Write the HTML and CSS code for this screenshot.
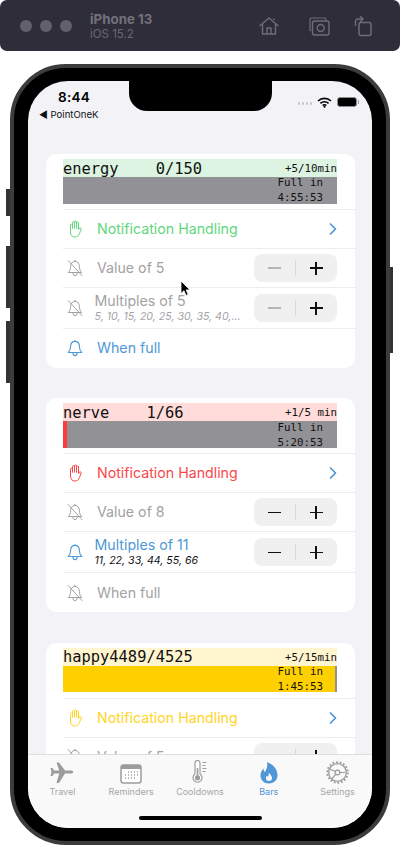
FILE: index.html
```html
<!DOCTYPE html>
<html lang="en">
<head>
    <meta charset="UTF-8">
    <meta name="viewport" content="width=device-width, initial-scale=1.0">
    <title>PointOneK bars</title>
    <link rel="stylesheet" href="styles.css">
</head>
<body>
    <svg class="defs" width="0" height="0">
        <symbol id="hand" viewBox="0 0 14 18">
            <path d="M2.5 11V5.2a1 1 0 0 1 2 0V8M4.5 8V2.6a1 1 0 0 1 2 0V8M6.5 8V2a1 1 0 0 1 2 0v6M8.5 8V3a1 1 0 0 1 2 0v6.6l.9-1.5a1 1 0 0 1 1.7 1l-1.6 4.4C10.6 16 9.2 17 7 17c-3 0-4.5-2-4.5-5V10" fill="none" stroke="currentColor" stroke-width="1" stroke-linecap="round" stroke-linejoin="round"/>
        </symbol>
        <symbol id="bell" viewBox="0 0 16 18">
            <path d="M8 2.4C5 2.4 3.6 4.8 3.6 7.5c0 3-1 4.6-2.4 6h13.6c-1.4-1.4-2.4-3-2.4-6C12.4 4.8 11 2.4 8 2.4zM8 2.4V1.2M6 13.8v.8a2 2 0 0 0 4 0v-.8" fill="none" stroke="currentColor" stroke-width="1.1" stroke-linecap="round" stroke-linejoin="round"/>
        </symbol>
        <symbol id="bell-off" viewBox="0 0 16 18">
            <path d="M8 2.4C5 2.4 3.6 4.8 3.6 7.5c0 3-1 4.6-2.4 6h13.6c-1.4-1.4-2.4-3-2.4-6C12.4 4.8 11 2.4 8 2.4zM8 2.4V1.2M6 13.8v.8a2 2 0 0 0 4 0v-.8M1.2 1.6l13.8 15" fill="none" stroke="currentColor" stroke-width="1" stroke-linecap="round" stroke-linejoin="round"/>
        </symbol>
        <symbol id="chevron" viewBox="0 0 8 12">
            <path d="M1.5 1l5 5-5 5" fill="none" stroke="currentColor" stroke-width="1.7" stroke-linecap="round" stroke-linejoin="round"/>
        </symbol>
    </svg>

    <header class="toolbar">
        <div class="lights"><span></span><span></span><span></span></div>
        <div class="device">
            <div class="device-name">iPhone 13</div>
            <div class="device-os">iOS 15.2</div>
        </div>
        <div class="tools">
            <svg class="tool-home" width="22" height="20" viewBox="0 0 22 20"><path d="M1.5 10L11 2l9.5 8M4.5 8v10h13V8M9 18v-6h4v6M16 4V2.5" fill="none" stroke="currentColor" stroke-width="1.4" stroke-linejoin="round"/></svg>
            <svg width="22" height="20" viewBox="0 0 22 20"><path d="M3 14.5H2V3.5A1.5 1.5 0 0 1 3.5 2h13A1.5 1.5 0 0 1 18 3.5V4" fill="none" stroke="currentColor" stroke-width="1.2"/><rect x="4.5" y="5" width="16.5" height="14" rx="2" fill="none" stroke="currentColor" stroke-width="1.4"/><circle cx="12.7" cy="12" r="3.5" fill="none" stroke="currentColor" stroke-width="1.4"/></svg>
            <svg width="18" height="22" viewBox="0 0 18 22"><rect x="5" y="7.5" width="12" height="13" rx="2" fill="none" stroke="currentColor" stroke-width="1.5"/><path d="M1.5 11V6.500A2.500 2.500 0 0 1 4 4h4M6 1l3 3-3 3" fill="none" stroke="currentColor" stroke-width="1.4"/></svg>
        </div>
    </header>

    <div class="phone">
        <span class="side side-mute"></span>
        <span class="side side-up"></span>
        <span class="side side-down"></span>
        <span class="side side-power"></span>

        <div class="screen">
            <div class="notch"></div>
            <div class="status">
                <div>
                    <div class="time">8:44</div>
                    <div class="back">&#9664; PointOneK</div>
                </div>
                <div class="status-icons">
                    <span class="signal"><i></i><i></i><i></i><i></i></span>
                    <svg width="15" height="11" viewBox="0 0 14 10"><path d="M1 3.6a8.500 8.500 0 0 1 12 0M3.200 5.800a5.400 5.400 0 0 1 7.600 0M5.300 7.800a2.400 2.400 0 0 1 3.400 0" fill="none" stroke="#000" stroke-width="1.5"/><circle cx="7" cy="9" r="1" fill="#000"/></svg>
                    <span class="battery"></span>
                </div>
            </div>

            <main class="list">
                <section class="card">
                    <div class="bar-head bar-head-green">
                        <span class="bar-title">energy    0/150</span>
                        <span class="bar-rate">+5/10min</span>
                    </div>
                    <div class="bar">
                        <div class="bar-fill fill-green" style="width: 0%"></div>
                        <div class="bar-time">Full in<br>4:55:53</div>
                    </div>
                    <div class="row row-first text-green">
                        <svg class="row-icon hand"><use href="#hand"/></svg>
                        <span class="row-label">Notification Handling</span>
                        <svg class="chevron"><use href="#chevron"/></svg>
                    </div>
                    <div class="row row-value text-off">
                        <svg class="row-icon"><use href="#bell-off"/></svg>
                        <span class="row-label">Value of 5</span>
                        <div class="stepper"><span class="minus off"></span><span class="plus"></span></div>
                    </div>
                    <div class="row row-multi text-off">
                        <svg class="row-icon"><use href="#bell-off"/></svg>
                        <div class="row-stack">
                            <span class="row-label">Multiples of 5</span>
                            <span class="row-sub">5, 10, 15, 20, 25, 30, 35, 40,...</span>
                        </div>
                        <div class="stepper"><span class="minus off"></span><span class="plus"></span></div>
                    </div>
                    <div class="row row-last text-blue">
                        <svg class="row-icon"><use href="#bell"/></svg>
                        <span class="row-label">When full</span>
                    </div>
                </section>

                <section class="card">
                    <div class="bar-head bar-head-red">
                        <span class="bar-title">nerve    1/66</span>
                        <span class="bar-rate">+1/5 min</span>
                    </div>
                    <div class="bar">
                        <div class="bar-fill fill-red" style="width: 1.5%"></div>
                        <div class="bar-time">Full in<br>5:20:53</div>
                    </div>
                    <div class="row row-first text-red">
                        <svg class="row-icon hand"><use href="#hand"/></svg>
                        <span class="row-label">Notification Handling</span>
                        <svg class="chevron"><use href="#chevron"/></svg>
                    </div>
                    <div class="row row-value text-off">
                        <svg class="row-icon"><use href="#bell-off"/></svg>
                        <span class="row-label">Value of 8</span>
                        <div class="stepper"><span class="minus"></span><span class="plus"></span></div>
                    </div>
                    <div class="row row-multi text-blue">
                        <svg class="row-icon"><use href="#bell"/></svg>
                        <div class="row-stack">
                            <span class="row-label">Multiples of 11</span>
                            <span class="row-sub row-sub-on">11, 22, 33, 44, 55, 66</span>
                        </div>
                        <div class="stepper"><span class="minus"></span><span class="plus"></span></div>
                    </div>
                    <div class="row row-last text-off">
                        <svg class="row-icon"><use href="#bell-off"/></svg>
                        <span class="row-label">When full</span>
                    </div>
                </section>

                <section class="card">
                    <div class="bar-head bar-head-yellow">
                        <span class="bar-title">happy4489/4525</span>
                        <span class="bar-rate">+5/15min</span>
                    </div>
                    <div class="bar">
                        <div class="bar-fill fill-yellow" style="width: 99.2%"></div>
                        <div class="bar-time">Full in<br>1:45:53</div>
                    </div>
                    <div class="row row-first text-yellow">
                        <svg class="row-icon hand"><use href="#hand"/></svg>
                        <span class="row-label">Notification Handling</span>
                        <svg class="chevron"><use href="#chevron"/></svg>
                    </div>
                    <div class="row row-value text-off">
                        <svg class="row-icon"><use href="#bell-off"/></svg>
                        <span class="row-label">Value of 5</span>
                        <div class="stepper"><span class="minus"></span><span class="plus"></span></div>
                    </div>
                </section>
            </main>

            <nav class="tabs">
                <div class="tab">
                    <svg width="24" height="22" viewBox="0 0 24 22"><path d="M6.5.5H9l6 8h6c3 0 3 3 0 3h-6l-6 9.500H6.5l2.700-9.500H4l-1.500 2.500h-2l1-4-1-4h2L4 8.500h5.200z" fill="currentColor"/></svg>
                    <span>Travel</span>
                </div>
                <div class="tab">
                    <svg width="22" height="20" viewBox="0 0 22 20"><rect x="1" y="1" width="20" height="18" rx="2.5" fill="#fff" stroke="currentColor" stroke-width="1.5"/><path d="M1 2.500A1.500 1.500 0 0 1 2.500 1h17A1.500 1.500 0 0 1 21 2.500V5H1z" fill="currentColor"/><path d="M8 8h1M11 8h1M14 8h1M17 8h1M5 11h1M8 11h1M11 11h1M14 11h1M17 11h1M5 14h1M8 14h1M11 14h1M14 14h1" stroke="currentColor" stroke-width="1.3"/></svg>
                    <span>Reminders</span>
                </div>
                <div class="tab">
                    <svg width="16" height="24" viewBox="0 0 16 24"><path d="M3 14V3a2.500 2.500 0 0 1 5 0v11a4.500 4.500 0 1 1-5 0z" fill="#fff" stroke="currentColor" stroke-width="1.2"/><circle cx="5.5" cy="17.800" r="2.600" fill="currentColor"/><path d="M5.500 17V8" stroke="currentColor" stroke-width="1.6"/><path d="M10.500 2.500h4M10.500 5.500h3M10.500 8.500h4M10.500 11.500h3" stroke="currentColor"/></svg>
                    <span>Cooldowns</span>
                </div>
                <div class="tab tab-active">
                    <svg width="18" height="22" viewBox="0 0 18 22"><path fill-rule="evenodd" d="M7 0c5 2 10 6 10.500 12.500C17.800 18 14 21.500 9 21.500S.5 18 .5 13.500C.5 10.500 2 8 3.500 6.500c0 2 .5 3 1.500 3.500C6.500 7.500 8 4 7 0zM9 10.500c.5 2 3 3 3 5.500a3 3 0 0 1-6 0c0-1 .5-2 1.200-2.500 0 .8.300 1.200.800 1.300.5-1 .800-2.500 1-4.300z" fill="currentColor"/></svg>
                    <span>Bars</span>
                </div>
                <div class="tab">
                    <svg width="23" height="23" viewBox="0 0 23 23"><circle cx="11.5" cy="11.5" r="8.800" fill="none" stroke="currentColor" stroke-width="1.3"/><circle cx="11.5" cy="11.5" r="10.300" fill="none" stroke="currentColor" stroke-width="1.8" stroke-dasharray="1.8 1.8"/><circle cx="11.5" cy="11.5" r="2.400" fill="none" stroke="currentColor" stroke-width="1.2"/><path d="M3.500 8l5.800 2.500M9.800 13.400L5.500 18M13.900 11.500h5" fill="none" stroke="currentColor" stroke-width="1.2"/></svg>
                    <span>Settings</span>
                </div>
                <div class="home-bar"></div>
            </nav>
        </div>
    </div>

    <svg class="cursor" width="12" height="17" viewBox="0 0 12 17"><path d="M1 1v12.500l3-2.800 2 4.800 2.200-1-2-4.600H10z" fill="#000" stroke="#fff" stroke-width=".8"/></svg>
</body>
</html>
```

FILE: styles.css
```css
* {
    box-sizing: border-box;
}
body {
    margin: 0;
    width: 400px;
    height: 848px;
    overflow: hidden;
    position: relative;
    background: #fff;
    font-family: 'Inter', 'Noto Sans', sans-serif;
}
.defs {
    position: absolute;
}

/* simulator toolbar */
.toolbar {
    height: 51px;
    background: #2f2d3a;
    border-radius: 7px;
    display: flex;
    align-items: center;
    padding: 0 28px 0 20px;
}
.lights {
    display: flex;
    gap: 8px;
    width: 70px;
}
.lights span {
    width: 12px;
    height: 12px;
    border-radius: 50%;
    background: #62616b;
}
.device {
    padding-top: 2px;
}
.device-name {
    color: #72717b;
    font-size: 13.3px;
    font-weight: 700;
    line-height: 15px;
}
.device-os {
    color: #696872;
    font-size: 11.5px;
    line-height: 14px;
}
.tools {
    margin-left: auto;
    display: flex;
    align-items: center;
    gap: 24px;
    color: #6e6d77;
}
.tool-home {
    margin-right: 4px;
}

/* phone frame */
.phone {
    position: relative;
    width: 380px;
    height: 781px;
    margin: 13px 0 0 10px;
    padding: 13px 14px;
    background: #000;
    border: 4px solid #3c3c3e;
    border-radius: 56px;
}
.side {
    position: absolute;
    background: #333336;
}
.side-mute {
    left: -8px;
    top: 121px;
    width: 4px;
    height: 27px;
}
.side-up {
    left: -8px;
    top: 178px;
    width: 4px;
    height: 62px;
}
.side-down {
    left: -8px;
    top: 253px;
    width: 4px;
    height: 62px;
}
.side-power {
    right: -7px;
    top: 199px;
    width: 3px;
    height: 86px;
}
.screen {
    position: relative;
    height: 100%;
    background: #f2f2f7;
    border-radius: 40px;
    overflow: hidden;
    display: flex;
    flex-direction: column;
}
.notch {
    position: absolute;
    left: 101px;
    top: 0;
    width: 143px;
    height: 30px;
    background: #000;
    border-radius: 0 0 18px 18px;
}

/* status bar */
.status {
    height: 73px;
    flex: none;
    display: flex;
    justify-content: space-between;
    padding: 8px 15px 0 11px;
}
.time {
    margin-left: 19px;
    font-size: 13.5px;
    font-weight: 600;
    line-height: 17px;
    letter-spacing: .3px;
    color: #000;
}
.back {
    font-size: 9.6px;
    line-height: 14px;
    margin-top: 2px;
    color: #111;
}
.status-icons {
    display: flex;
    align-items: center;
    gap: 5px;
    height: 22px;
    margin-top: 2px;
}
.signal {
    display: flex;
    gap: 1.5px;
    margin-top: 3px;
}
.signal i {
    width: 2.5px;
    height: 2.5px;
    background: #c9c9cc;
    border-radius: 1px;
}
.battery {
    position: relative;
    width: 20px;
    height: 10px;
    background: #000;
    border: 1px solid #8d8d90;
    border-radius: 3px;
}
.battery::after {
    content: "";
    position: absolute;
    right: -3px;
    top: 2px;
    width: 1.5px;
    height: 4px;
    background: #9a9a9d;
}

/* list of bars */
.list {
    flex: 1;
    min-height: 0;
    overflow: hidden;
    padding: 0 17px 0 18px;
}
.card {
    background: #fff;
    border-radius: 10px;
    padding: 5px 0 0 17px;
    margin-bottom: 30.8px;
}
.bar-head {
    height: 18px;
    margin-right: 18px;
    display: flex;
    justify-content: space-between;
    align-items: center;
    padding-top: 1px;
    font-family: 'DejaVu Sans Mono', 'Liberation Mono', monospace;
    color: #111;
}
.bar-head-green {
    background: #dcf4e1;
}
.bar-head-red {
    background: #ffdcd9;
}
.bar-head-yellow {
    background: #fff5cf;
}
.bar-title {
    font-size: 15.4px;
    white-space: pre;
}
.bar-rate {
    font-size: 10.8px;
}
.bar {
    position: relative;
    height: 26.5px;
    margin-right: 18px;
    background: #929296;
    display: flex;
    align-items: center;
    justify-content: flex-end;
}
.bar-fill {
    position: absolute;
    left: 0;
    top: 0;
    bottom: 0;
}
.fill-green {
    background: #5fd67e;
}
.fill-red {
    background: #ff3b3b;
}
.fill-yellow {
    background: #ffd000;
}
.bar-time {
    position: relative;
    margin-right: 14px;
    font-family: 'DejaVu Sans Mono', 'Liberation Mono', monospace;
    font-size: 10.8px;
    line-height: 15px;
    color: #111;
}

/* rows */
.row {
    display: flex;
    align-items: center;
    padding-right: 18px;
    border-top: 1px solid #ececef;
}
.row-first {
    height: 39px;
    margin-top: 5.5px;
}
.row-value {
    height: 39px;
}
.row-multi {
    height: 41px;
}
.row-last {
    height: 39.5px;
}
.row-icon {
    width: 16px;
    height: 18px;
    margin-left: 4px;
    margin-right: 14px;
    flex: none;
}
.row-label {
    font-size: 14.2px;
    line-height: 16px;
}
.row-stack {
    display: flex;
    flex-direction: column;
    margin-left: -2.5px;
}
.row-sub {
    font-size: 10.6px;
    font-style: italic;
    line-height: 12px;
    margin-top: 2px;
    color: #a3a3a6;
}
.row-sub-on {
    color: #111;
}
.chevron {
    width: 8px;
    height: 12px;
    margin-left: auto;
    color: #4f97d6;
}
.stepper {
    margin-left: auto;
    width: 83px;
    height: 28px;
    border-radius: 8px;
    background: #f0f0f1;
    display: flex;
    position: relative;
    flex: none;
}
.stepper::after {
    content: "";
    position: absolute;
    left: 41px;
    top: 6px;
    width: 1px;
    height: 16px;
    background: #d8d8da;
}
.minus,
.plus {
    position: relative;
    flex: 1;
}
.minus::before,
.plus::before,
.plus::after {
    content: "";
    position: absolute;
    left: 50%;
    top: 50%;
    width: 13px;
    height: 1.6px;
    margin: -.8px 0 0 -6.5px;
    background: #111;
}
.plus::after {
    width: 1.6px;
    height: 13px;
    margin: -6.5px 0 0 -.8px;
}
.minus.off::before {
    background: #b5b5b8;
}
.text-green {
    color: #5fd67e;
}
.text-red {
    color: #f9474b;
}
.text-yellow {
    color: #ffd426;
}
.text-blue {
    color: #4f97d6;
}
.text-off {
    color: #a2a2a4;
}

/* tab bar */
.tabs {
    position: relative;
    height: 74px;
    flex: none;
    display: flex;
    background: #f9f9f9;
    border-top: 1px solid #dedee0;
    color: #9c9c9e;
}
.tab {
    flex: 1;
    height: 43px;
    display: flex;
    flex-direction: column;
    align-items: center;
    justify-content: flex-end;
    gap: 2px;
}
.tab svg {
    flex: none;
}
.tab span {
    font-size: 9px;
    line-height: 12px;
    color: #a6a6a8;
}
.tab-active,
.tab-active span {
    color: #4f97d6;
}
.home-bar {
    position: absolute;
    left: 111px;
    bottom: 8px;
    width: 123px;
    height: 4px;
    border-radius: 2px;
    background: #000;
}

/* simulator mouse pointer */
.cursor {
    position: absolute;
    left: 180px;
    top: 280px;
}
```
